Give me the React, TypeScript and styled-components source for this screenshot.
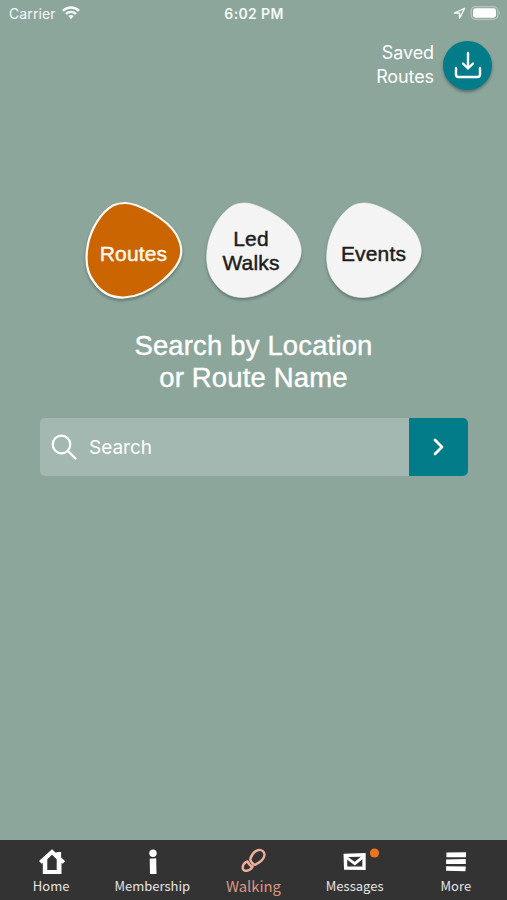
import React from "react";
import styled, { createGlobalStyle } from "styled-components";

const GlobalStyle = createGlobalStyle`
  * { box-sizing: border-box; }
  body { margin: 0; background: #8ca69c; }
  button { border: 0; padding: 0; background: none; cursor: pointer; }
`;

const Screen = styled.main`
  width: 507px;
  height: 900px;
  display: flex;
  flex-direction: column;
  background: #8ca69c;
  color: #fff;
  font-family: Inter, sans-serif;
  overflow: hidden;
`;

const StatusBar = styled.header`
  height: 26px;
  display: grid;
  grid-template-columns: 1fr auto 1fr;
  align-items: center;
  padding: 0 6px 0 9px;
  color: #f4faf7;
`;

const Carrier = styled.div`
  display: flex;
  align-items: center;
  gap: 6px;
  font-size: 14px;
  letter-spacing: 0.12px;
`;

const Clock = styled.div`
  padding-right: 2px;
  font-size: 14px;
  font-weight: 600;
  letter-spacing: 0.35px;
`;

const StatusIcons = styled.div`
  display: flex;
  justify-content: flex-end;
  align-items: center;
  gap: 4px;
`;

const SavedRoutes = styled.section`
  display: flex;
  justify-content: flex-end;
  align-items: center;
  gap: 9px;
  height: 50px;
  margin-top: 14px;
  padding-right: 15px;
`;

const SavedLabel = styled.div`
  font-size: 18px;
  line-height: 24px;
  text-align: right;
  letter-spacing: -0.1px;
`;

const DownloadButton = styled.button`
  width: 49px;
  height: 49px;
  border-radius: 50%;
  display: grid;
  place-items: center;
  background: #027c88;
  box-shadow: 0 2px 3px rgba(30, 50, 45, 0.45);
`;

const Choices = styled.nav`
  display: flex;
  justify-content: center;
  gap: 20px;
  margin-top: 110px;
`;

const Choice = styled.button<{ $active?: boolean; $stacked?: boolean }>`
  width: 100px;
  height: 100px;
  display: grid;
  place-items: center;
  color: ${(p) => (p.$active ? "#fff8ee" : "#1c1c1c")};
  font-family: "Liberation Sans", Arial, sans-serif;
  font-size: 21px;
  line-height: 24px;
  letter-spacing: 0.15px;
  -webkit-text-stroke: 0.45px currentColor;

  > * { grid-area: 1 / 1; }
  > span {
    z-index: 1;
    padding: ${(p) => (p.$stacked ? "2px 5px 0 0" : "8px 0 0")};
    white-space: pre-line;
  }
`;

const Blob = styled.svg`
  filter: drop-shadow(0 2px 1.5px rgba(35, 55, 48, 0.42));
`;

const Heading = styled.h1`
  margin: 30px 0 0;
  text-align: center;
  font-family: "Liberation Sans", Arial, sans-serif;
  font-size: 27.5px;
  line-height: 32px;
  font-weight: 400;
  letter-spacing: 0.15px;
  -webkit-text-stroke: 0.4px currentColor;
`;

const SearchBar = styled.form`
  display: flex;
  height: 58px;
  margin: 24px 39px 0 40px;
  border-radius: 5px;
  overflow: hidden;
  background: #a3b8b0;
`;

const SearchField = styled.label`
  flex: 1;
  display: flex;
  align-items: center;
  gap: 12px;
  padding-left: 11px;
  font-size: 19px;
`;

const GoButton = styled.button`
  width: 59px;
  display: grid;
  place-items: center;
  background: #027c88;
`;

const TabBar = styled.nav`
  height: 60px;
  margin-top: auto;
  padding-left: 1px;
  display: grid;
  grid-template-columns: repeat(5, 101.2px);
  background: #333333;
`;

const Tab = styled.button<{ $active?: boolean }>`
  display: flex;
  flex-direction: column;
  align-items: center;
  padding-top: 8px;
  color: ${(p) => (p.$active ? "#dc9683" : "#e6e6e6")};
  font-family: "Noto Sans CJK SC", sans-serif;
  font-size: ${(p) => (p.$active ? "14.8px" : "13px")};
  line-height: 20px;

  svg { display: block; margin: 0 0 2px; overflow: visible; }
  span { padding-right: 1px; }
`;

const blobPath =
  "M41 3C54 3 83 19 92 34C96 41 98 48 97 54C96 62 90 71 78 81C67 90 54 97 40 97.5C27 98 17 92 10 82C3 73 1 59 4 44C7 29 17 12 29 5.5C33 3.5 37 3 41 3Z";

function ChoiceButton({ label, active }: { label: string; active?: boolean }) {
  return (
    <Choice $active={active} $stacked={label.includes("\n")}>
      <Blob width="100" height="100" viewBox="0 0 100 100">
        <path
          d={blobPath}
          fill={active ? "#ca6501" : "#f4f4f4"}
          stroke={active ? "#fffaf2" : "#f4f4f4"}
          strokeWidth={active ? 2.2 : 0.6}
        />
      </Blob>
      <span>{label}</span>
    </Choice>
  );
}

const WifiIcon = () => (
  <svg width="18" height="14" viewBox="0 0 18 14" fill="none" stroke="currentColor" strokeWidth="2.4">
    <path d="M1 4.8C5.4 .3 12.6 .3 17 4.8M4 8C6.8 5.2 11.2 5.2 14 8" />
    <path d="M6.2 10.1Q9 7.9 11.8 10.1L9 13.2Z" fill="currentColor" stroke="none" />
  </svg>
);

const LocationIcon = () => (
  <svg width="13" height="13" viewBox="0 0 13 13" fill="none" stroke="currentColor" strokeWidth="1.3" strokeLinejoin="round">
    <path d="M11.6 1.4L1.3 6H6.5V11.4Z" />
  </svg>
);

const BatteryIcon = () => (
  <svg width="31" height="14" viewBox="0 0 31 14">
    <rect x="1.2" y=".7" width="26.6" height="12.6" rx="4" fill="none" stroke="#b4c6bf" strokeWidth="1.3" />
    <rect x="3" y="2.3" width="23" height="9.4" rx="2.4" fill="#fff" />
    <path d="M29 5Q30.9 7 29 9Z" fill="#b4c6bf" />
  </svg>
);

const DownloadIcon = () => (
  <svg width="28" height="28" viewBox="0 0 28 28" fill="none" stroke="#fff" strokeWidth="2.4" strokeLinecap="round" strokeLinejoin="round">
    <path d="M14 2V17M9 12.5L14 17.5L19 12.5M2 17V23.5Q2 26 4.5 26H23.5Q26 26 26 23.5V17" />
  </svg>
);

const HomeIcon = () => (
  <svg width="28" height="26" viewBox="0 0 28 26">
    <path d="M14 1.2L18.4 5.2V4H23.1V9.4L27.2 13.2L24.6 15.7L23.5 14.8V26H4.8V14.8L3.6 15.7L1 13.1ZM14 6.8L9.3 11.3V22H18.7V11.3Z" fill="#fff" fillRule="evenodd" />
  </svg>
);

const InfoIcon = () => (
  <svg width="28" height="26" viewBox="0 0 28 26" fill="#fff">
    <circle cx="14" cy="5.2" r="3.7" />
    <path d="M10.7 10.7L17.2 10.2L17.5 26H11Z" />
  </svg>
);

const WalkingIcon = () => (
  <svg width="28" height="26" viewBox="0 0 28 26" fill="none" stroke="#f0b09d" strokeWidth="2.4" strokeLinejoin="round">
    <path d="M10.2 11.3C11 8.3 13.3 4.5 16.3 2.9C19.2 1.4 22.5 1.8 23.8 4.2C25.2 6.8 24 10.2 21.7 12.3C19.8 14.1 17.3 15.5 15.1 16.8C12.8 16.1 11 13.9 10.2 11.3Z" />
    <path d="M7.6 13.4C5.1 14.3 3.1 16.3 2.7 18.8C2.3 21.3 4.1 23.2 6.6 22.8C9.2 22.5 11.4 20.6 12.6 18.6C10.2 17.6 8.4 15.9 7.6 13.4Z" />
  </svg>
);

const MessagesIcon = () => (
  <svg width="28" height="26" viewBox="0 0 28 26">
    <path d="M2.5 5.8L24.7 5.1V22.1L3 21.8Z" fill="#fff" />
    <path d="M6.2 9.1L21.3 8.7V18.5L6.3 18.4Z" fill="#333" />
    <path d="M5.6 9.5L13.8 15.6L22 8.8" fill="none" stroke="#fff" strokeWidth="2.8" />
    <circle cx="33.5" cy="5" r="4.6" fill="#ee7419" />
  </svg>
);

const MoreIcon = () => (
  <svg width="28" height="26" viewBox="0 0 28 26" fill="#fff">
    <path d="M4.4 4.5L24 4.2V9.3H4.4ZM4.1 11.4L23.8 10.9V16.1L4.1 15.9ZM4.1 18.2L23.8 18.6L23.4 23.2L4.1 22.7Z" />
  </svg>
);

const tabs = [
  { label: "Home", Icon: HomeIcon },
  { label: "Membership", Icon: InfoIcon },
  { label: "Walking", Icon: WalkingIcon, active: true },
  { label: "Messages", Icon: MessagesIcon },
  { label: "More", Icon: MoreIcon },
];

export default function App() {
  return (
    <Screen>
      <GlobalStyle />
      <StatusBar>
        <Carrier>Carrier <WifiIcon /></Carrier>
        <Clock>6:02 PM</Clock>
        <StatusIcons><LocationIcon /><BatteryIcon /></StatusIcons>
      </StatusBar>
      <SavedRoutes>
        <SavedLabel>Saved<br />Routes</SavedLabel>
        <DownloadButton aria-label="Saved Routes"><DownloadIcon /></DownloadButton>
      </SavedRoutes>
      <Choices>
        <ChoiceButton label="Routes" active />
        <ChoiceButton label={"Led\nWalks"} />
        <ChoiceButton label="Events" />
      </Choices>
      <Heading>Search by Location<br />or Route Name</Heading>
      <SearchBar onSubmit={(event) => event.preventDefault()}>
        <SearchField>
          <svg width="26" height="26" viewBox="0 0 26 26" fill="none" stroke="#fff" strokeWidth="2.2" strokeLinecap="round">
            <circle cx="10.5" cy="10.5" r="8.8" />
            <path d="M17 17L24.5 24.5" />
          </svg>
          <span>Search</span>
        </SearchField>
        <GoButton aria-label="Submit search">
          <svg width="14" height="20" viewBox="0 0 14 20" fill="none" stroke="#fff" strokeWidth="2.8" strokeLinecap="round" strokeLinejoin="round">
            <path d="M3 3L10 10L3 17" />
          </svg>
        </GoButton>
      </SearchBar>
      <TabBar>
        {tabs.map(({ label, Icon, active }) => (
          <Tab key={label} $active={active}><Icon /><span>{label}</span></Tab>
        ))}
      </TabBar>
    </Screen>
  );
}
